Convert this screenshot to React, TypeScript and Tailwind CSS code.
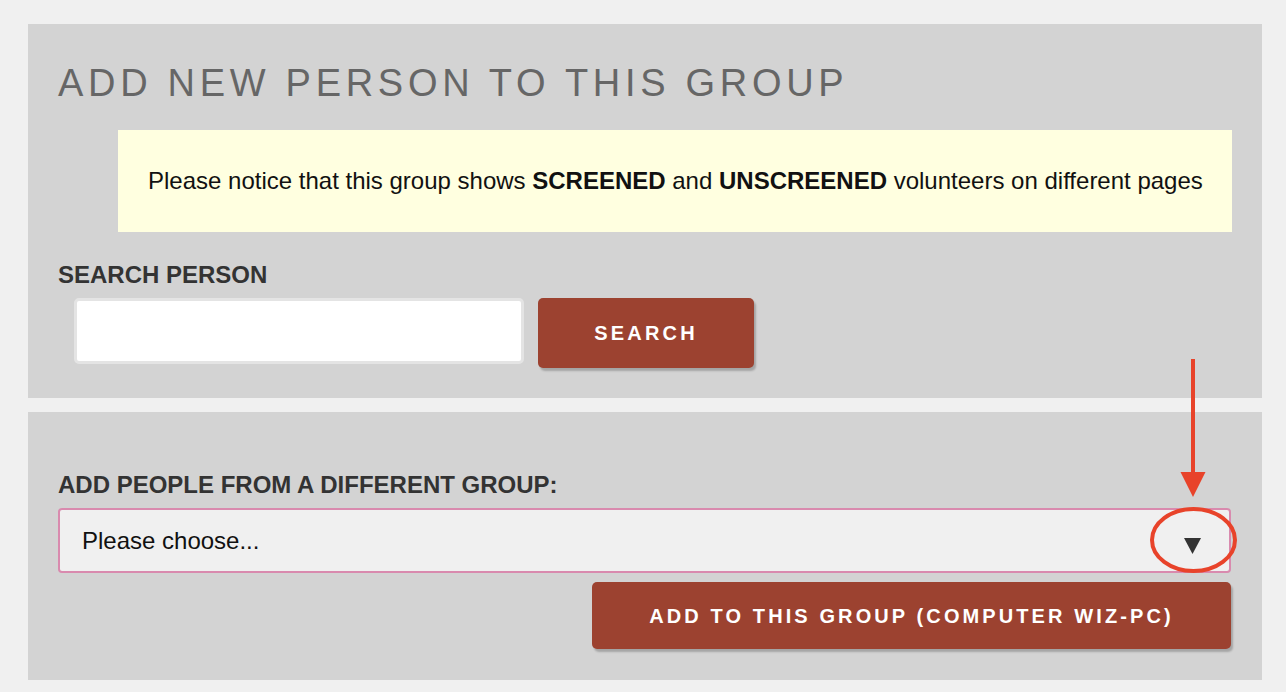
import React from "react";

const font = { fontFamily: '"Liberation Sans", Arial, sans-serif' };

function SearchPersonPanel() {
  return (
    <section className="bg-[#d3d3d3] px-[30px] pb-[30px] pt-[37px]">
      <h1 className="text-[38px] leading-[44px] font-normal tracking-[4.7px] text-[#666666]">
        ADD NEW PERSON TO THIS GROUP
      </h1>

      <div className="ml-[60px] mt-[25px] flex h-[102px] items-center bg-[#ffffe0] pl-[30px] text-[24px] leading-[28px] text-[#111111]">
        <p>
          Please notice that this group shows <b>SCREENED</b> and <b>UNSCREENED</b> volunteers on different pages
        </p>
      </div>

      <label className="mt-[29px] block text-[24px] leading-[28px] font-bold text-[#333333]">
        SEARCH PERSON
      </label>

      <div className="ml-[16px] mt-[9px] flex items-start gap-[14px]">
        <input
          type="text"
          className="h-[66px] w-[450px] rounded-[5px] border-[3px] border-[#e4e4e4] bg-white outline-none"
        />
        <button className="h-[70px] w-[216px] rounded-[5px] bg-[#9c4230] text-[20px] font-bold tracking-[3.2px] text-white shadow-[2px_3px_2px_rgba(0,0,0,0.22)]">
          SEARCH
        </button>
      </div>
    </section>
  );
}

function OtherGroupPanel() {
  return (
    <section className="bg-[#d3d3d3] px-[30px] pb-[31px] pt-[59px]">
      <label className="block text-[24px] leading-[28px] font-bold text-[#333333]">
        ADD PEOPLE FROM A DIFFERENT GROUP:
      </label>

      <div className="mt-[9px] flex h-[65px] w-[1173px] items-center justify-between rounded-[4px] border-2 border-[#d98aae] bg-[#f0f0f0] pl-[22px] pr-[28px]">
        <span className="text-[24px] leading-[28px] text-[#111111]">Please choose...</span>
        <svg width="17" height="16" viewBox="0 0 17 16" className="mt-[10px]">
          <polygon points="0,0 17,0 8.5,16" fill="#333333" />
        </svg>
      </div>

      <div className="mt-[9px] flex w-[1173px] justify-end">
        <button className="h-[67px] w-[639px] rounded-[5px] bg-[#9c4230] text-[20px] font-bold tracking-[3.1px] text-white shadow-[2px_3px_2px_rgba(0,0,0,0.22)]">
          ADD TO THIS GROUP (COMPUTER WIZ-PC)
        </button>
      </div>
    </section>
  );
}

// red callout pointing at the dropdown caret
function Callout() {
  return (
    <svg
      className="pointer-events-none absolute left-[1140px] top-[350px]"
      width="110"
      height="235"
      viewBox="0 0 110 235"
    >
      <line x1="53" y1="9" x2="53" y2="124" stroke="#e8432a" strokeWidth="4" />
      <polygon points="40.5,122 65.5,122 53,147" fill="#e8432a" />
      <ellipse cx="53.5" cy="190" rx="41.5" ry="31" fill="none" stroke="#e8432a" strokeWidth="4" />
    </svg>
  );
}

export default function App() {
  return (
    <div className="relative min-h-[692px] bg-[#f0f0f0] pl-[28px] pr-[24px] pt-[24px]" style={font}>
      <div className="flex flex-col gap-[14px]">
        <SearchPersonPanel />
        <OtherGroupPanel />
      </div>
      <Callout />
    </div>
  );
}
